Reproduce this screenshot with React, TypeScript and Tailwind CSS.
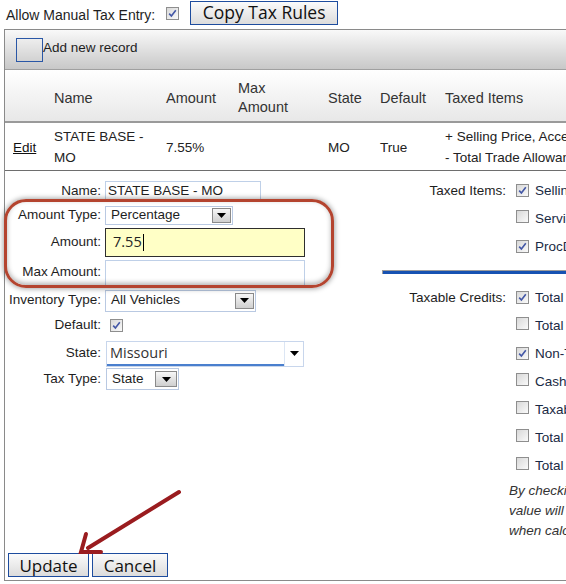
import React from "react";

const Check = ({ checked }: { checked?: boolean }) => (
  <span className="inline-flex w-[13px] h-[13px] shrink-0 items-center justify-center border border-[#8e8e8e] bg-linear-to-br from-[#d8d8d8] to-[#fafafa]">
    {checked && (
      <svg width="9" height="9" viewBox="0 0 9 9">
        <path d="M1.2 4.6 L3.4 7 L7.8 1.2" stroke="#4357a6" strokeWidth="1.6" fill="none" />
      </svg>
    )}
  </span>
);

const Tri = () => (
  <svg width="9" height="5" viewBox="0 0 9 5">
    <path d="M0 0 H9 L4.5 5 Z" fill="#000" />
  </svg>
);

const Select = ({ text, box, btn }: { text: string; box: string; btn: string }) => (
  <div className={"flex items-center border border-[#b9c9e2] bg-white " + box}>
    <span className="flex-1 pl-[5px] whitespace-nowrap">{text}</span>
    <span className={"flex items-center justify-center mr-[1px] border border-[#8a8a8a] bg-linear-to-b from-[#f7f7f7] to-[#cfcfcf] " + btn}>
      <Tri />
    </span>
  </div>
);

const Row = ({ label, h, children }: { label: string; h: string; children: React.ReactNode }) => (
  <div className={"flex items-center " + h}>
    <div className="w-[96px] text-right whitespace-nowrap">{label}</div>
    <div className="ml-[4px] flex items-center">{children}</div>
  </div>
);

const RItem = ({ label, checked, text }: { label?: string; checked?: boolean; text: string }) => (
  <div className="flex items-center h-[28px] whitespace-nowrap">
    <div className="w-[124px] text-right">{label}</div>
    <div className="ml-[10px]">
      <Check checked={checked} />
    </div>
    <div className="ml-[6px] text-[#1a2a44]">{text}</div>
  </div>
);

export default function App() {
  return (
    <div className="relative w-[566px] h-[584px] overflow-hidden bg-white text-[#1e1e1e] font-['Liberation_Sans',Arial,sans-serif] text-[13.5px]">
      {/* top bar */}
      <div className="h-[29px] flex items-start pl-[6px] text-[14px]">
        <span className="mt-[5px]">Allow Manual Tax Entry:</span>
        <span className="ml-[11px] mt-[7px] flex">
          <Check checked />
        </span>
        <button className="ml-[11px] mt-[1px] w-[148px] h-[24px] border border-[#1d4c9e] bg-linear-to-b from-[#fbfbfb] to-[#dcdcdc] font-['Open_Sans',sans-serif] text-[17.5px] leading-none text-[#111] flex items-center justify-center">
          Copy Tax Rules
        </button>
      </div>

      {/* grid */}
      <div className="ml-[4px] w-[800px] h-[552px] border-l border-b border-[#8a8a8a]">
        {/* toolbar */}
        <div className="h-[41px] border-t border-b border-t-[#8a8a8a] border-b-[#a0a0a0] bg-linear-to-b from-[#f9f9f9] to-[#c8c8c8] flex items-start pt-[8px] pl-[11px]">
          <span className="w-[27px] h-[24px] border border-[#2a57a6]" />
          <span className="mt-[2px] leading-[16px]">Add new record</span>
        </div>
        {/* header */}
        <div className="h-[53px] pt-[5px] border-b-2 border-[#9a9a9a] bg-linear-to-b from-[#ffffff] to-[#e8e8e8] flex items-center text-[14.5px] text-[#333] leading-[19px]">
          <div className="w-[41px]" />
          <div className="w-[112px] pl-[8px]">Name</div>
          <div className="w-[72px] pl-[8px]">Amount</div>
          <div className="w-[90px] pl-[8px]">Max<br />Amount</div>
          <div className="w-[52px] pl-[8px]">State</div>
          <div className="w-[65px] pl-[8px]">Default</div>
          <div className="pl-[8px] whitespace-nowrap">Taxed Items</div>
        </div>
        {/* data row */}
        <div className="h-[48px] pt-[1px] border-b border-[#6e6e6e] flex items-center text-[13.5px] text-[#222] leading-[21px]">
          <div className="w-[41px] pl-[8px]">
            <span className="underline text-[#111]">Edit</span>
          </div>
          <div className="w-[112px] pl-[8px]">STATE BASE -<br />MO</div>
          <div className="w-[72px] pl-[8px]">7.55%</div>
          <div className="w-[90px] pl-[8px]" />
          <div className="w-[52px] pl-[8px]">MO</div>
          <div className="w-[65px] pl-[8px]">True</div>
          <div className="pl-[8px] whitespace-nowrap">
            + Selling Price, Accessories, Service Contract
            <br />- Total Trade Allowance
          </div>
        </div>

        {/* edit form */}
        <div className="flex">
          <div className="w-[377px] pt-[8px]">
            <Row label="Name:" h="h-[24px]">
              <div className="w-[156px] h-[20px] border border-[#bfd0e8] pl-[2px] flex items-center whitespace-nowrap">STATE BASE - MO</div>
            </Row>
            <Row label="Amount Type:" h="h-[24px]">
              <Select text="Percentage" box="w-[128px] h-[19px]" btn="w-[19px] h-[15px]" />
            </Row>
            <Row label="Amount:" h="h-[30px]">
              <div className="w-[200px] h-[29px] border border-[#2e2e2e] bg-[#ffffc6] pl-[7px] flex items-center font-['Open_Sans',sans-serif] text-[14.5px] text-[#222]">
                7.55<span className="inline-block w-[1px] h-[17px] bg-black ml-[1px]" />
              </div>
            </Row>
            <Row label="Max Amount:" h="h-[31px]">
              <div className="w-[200px] h-[26px] border border-[#bfd0e8]" />
            </Row>
            <Row label="Inventory Type:" h="h-[25px]">
              <Select text="All Vehicles" box="w-[151px] h-[22px]" btn="w-[19px] h-[16px]" />
            </Row>
            <Row label="Default:" h="h-[25px]">
              <span className="ml-[5px] flex">
                <Check checked />
              </span>
            </Row>
            <Row label="State:" h="h-[31px]">
              <div className="ml-[1px] w-[198px] h-[26px] border border-[#c8d6ec] flex">
                <div className="w-[177px] border-b-2 border-[#4a7fce] pl-[3px] flex items-center font-['Open_Sans',sans-serif] text-[14.5px] text-[#333]">Missouri</div>
                <div className="flex-1 border-l border-[#dce6f4] flex items-center justify-center">
                  <Tri />
                </div>
              </div>
            </Row>
            <Row label="Tax Type:" h="h-[20px]">
              <div className="ml-[1px]">
                <Select text="State" box="w-[73px] h-[22px]" btn="w-[22px] h-[16px]" />
              </div>
            </Row>
          </div>

          <div className="pt-[6px]">
            <RItem label="Taxed Items:" checked text="Selling Price" />
            <RItem text="Service Contract" />
            <RItem checked text="ProcDoc Fee" />
            <div className="mt-[9px] h-[4px] w-[400px] border-t border-l border-[#9c9c9c] bg-[#1752b2]" />
            <div className="mt-[10px]">
              <RItem label="Taxable Credits:" checked text="Total Trade Allowance" />
              <RItem text="Total Rebates" />
              <RItem checked text="Non-Taxable Credits" />
              <RItem text="Cash Down" />
              <RItem text="Taxable Fees" />
              <RItem text="Total Payoff" />
              <RItem text="Total Deposits" />
            </div>
            <div className="mt-[1px] pl-[127px] italic leading-[20px] text-[#333] whitespace-nowrap">
              By checking a credit, its
              <br />
              value will be subtracted
              <br />
              when calculating tax.
            </div>
          </div>
        </div>

        {/* buttons */}
        <div className="mt-[12px] pl-[3px] flex gap-[3px] font-['Open_Sans',sans-serif] text-[17px] text-[#111]">
          <button className="w-[81px] h-[24px] border border-[#1d4c9e] bg-linear-to-b from-[#fbfbfb] to-[#dcdcdc] leading-none flex items-center justify-center">Update</button>
          <button className="w-[76px] h-[24px] border border-[#1d4c9e] bg-linear-to-b from-[#fbfbfb] to-[#dcdcdc] leading-none flex items-center justify-center">Cancel</button>
        </div>
      </div>

      {/* red highlight annotation */}
      <div className="absolute left-[4px] top-[199px] w-[330px] h-[89px] rounded-[22px] border-[3px] border-[#b4442f] shadow-[0_0_5px_1px_rgba(0,0,0,0.35),inset_0_-2px_5px_rgba(0,0,0,0.3)] pointer-events-none" />

      {/* arrow annotation */}
      <svg className="absolute left-0 top-0 pointer-events-none" width="566" height="584" viewBox="0 0 566 584">
        <line x1="179" y1="492" x2="88" y2="548" stroke="#9a1c1f" strokeWidth="4" strokeLinecap="round" />
        <polyline points="86,534 81,552 101,552" fill="none" stroke="#9a1c1f" strokeWidth="4" strokeLinejoin="miter" strokeLinecap="round" />
      </svg>
    </div>
  );
}
